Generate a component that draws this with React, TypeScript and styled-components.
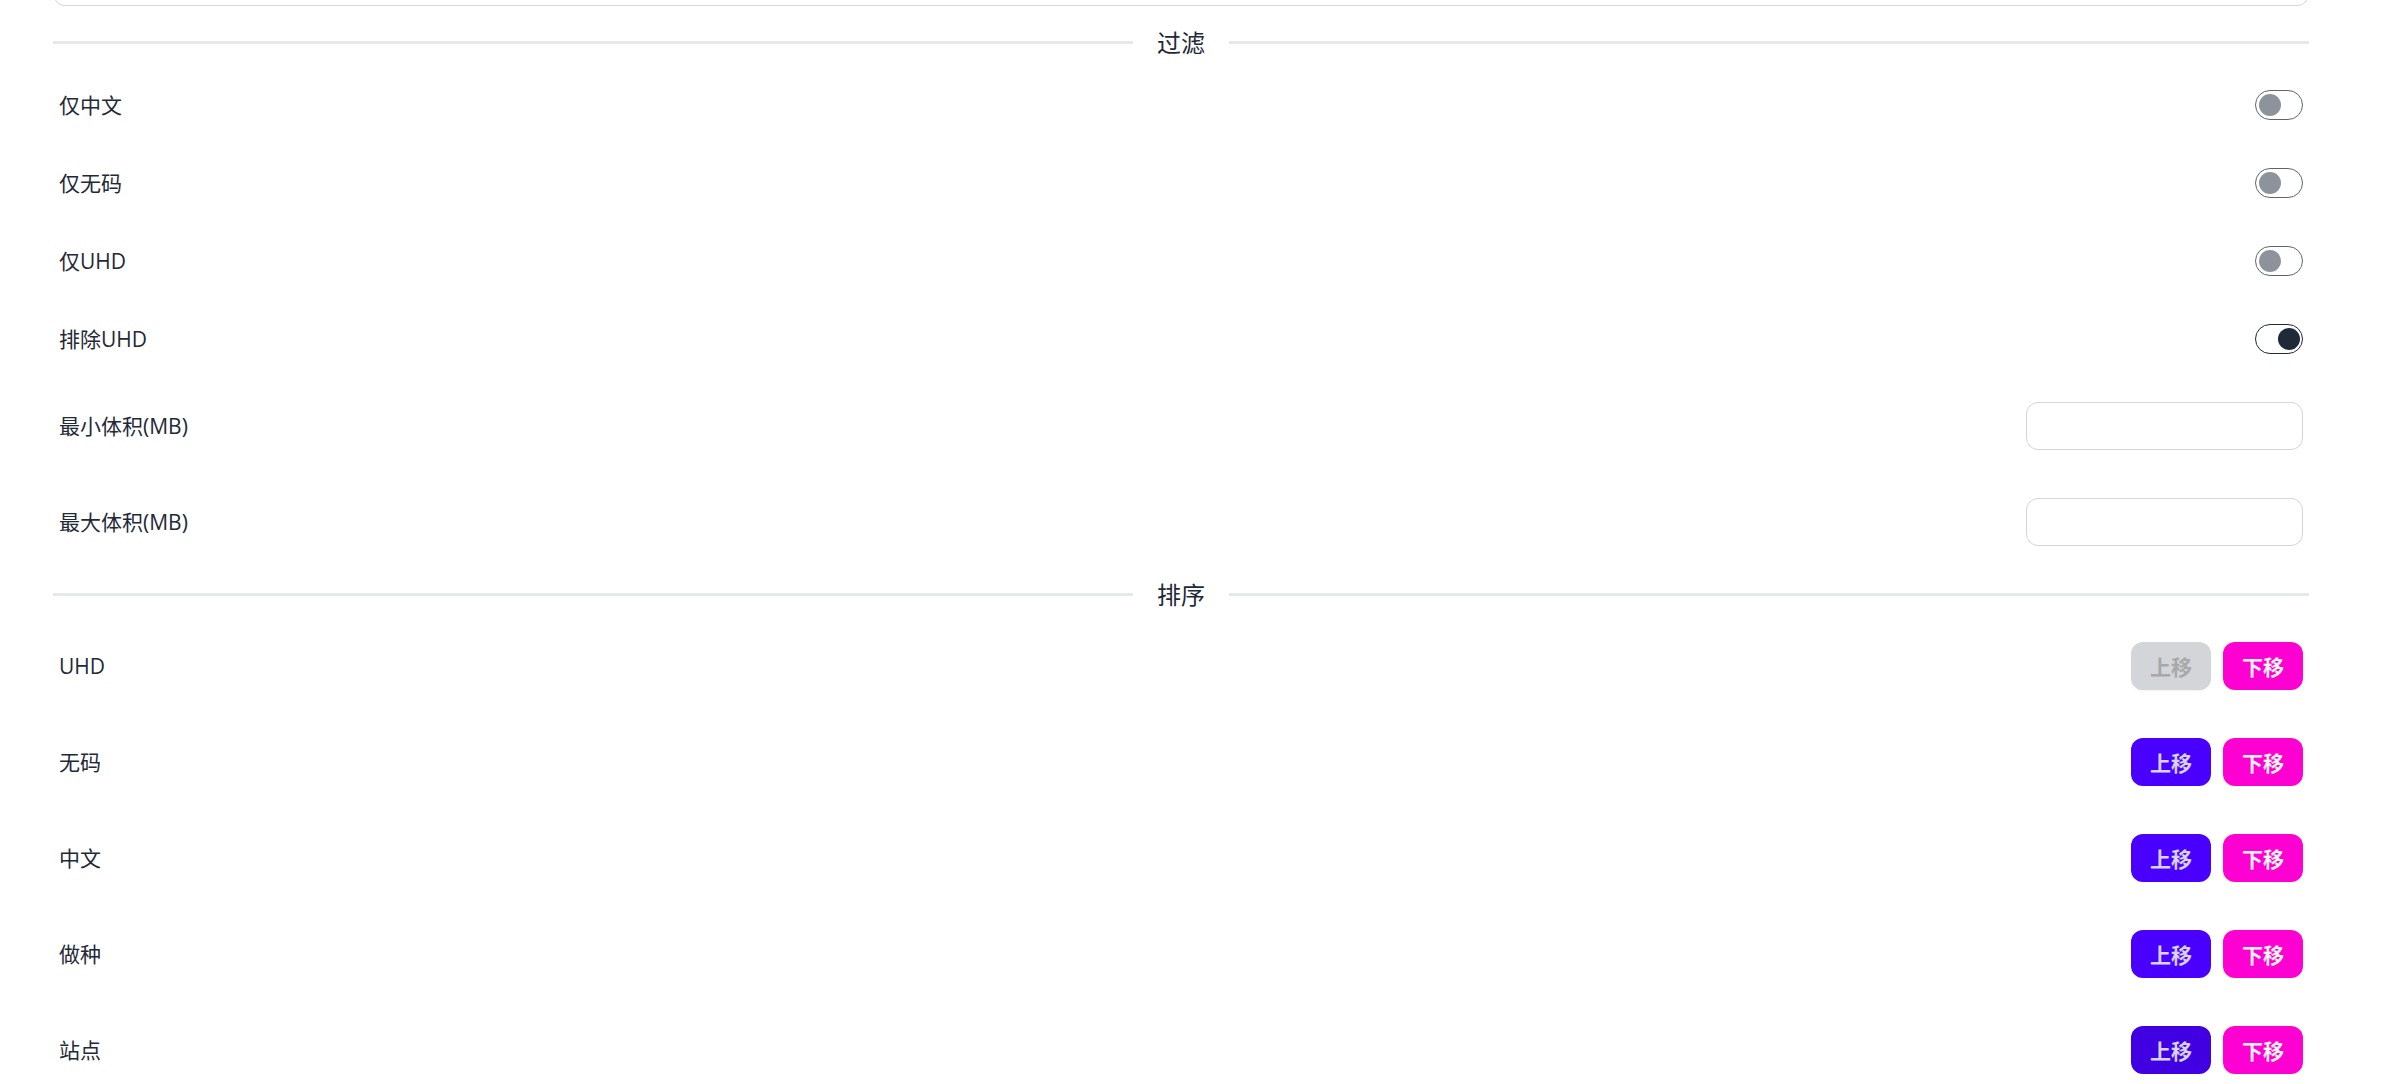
import React, { useState } from "react";
import styled, { createGlobalStyle } from "styled-components";

const GlobalStyle = createGlobalStyle`
    html, body {
        margin: 0;
        padding: 0;
        background: #ffffff;
        overflow: hidden;
    }
    body {
        font-family: "Open Sans", "Noto Sans CJK SC", sans-serif;
        color: #1f2937;
    }
`;

const filterItems = [
    { key: "chinese", label: "仅中文", on: false },
    { key: "uncensored", label: "仅无码", on: false },
    { key: "uhd", label: "仅UHD", on: false },
    { key: "noUhd", label: "排除UHD", on: true },
];

const sizeItems = [
    { key: "min", label: "最小体积(MB)" },
    { key: "max", label: "最大体积(MB)" },
];

const initialOrder = ["UHD", "无码", "中文", "做种", "站点"];

const App: React.FC = () => {
    const [toggles, setToggles] = useState<Record<string, boolean>>(
        Object.fromEntries(filterItems.map((f) => [f.key, f.on]))
    );
    const [sizes, setSizes] = useState<Record<string, string>>({ min: "", max: "" });
    const [order, setOrder] = useState<string[]>(initialOrder);

    const move = (index: number, dir: number) => {
        const next = [...order];
        const target = index + dir;
        if (target < 0 || target >= next.length) return;
        [next[index], next[target]] = [next[target], next[index]];
        setOrder(next);
    };

    return (
        <Page>
            <GlobalStyle />
            <TopField>
                <WideInput type="text" />
            </TopField>

            <Divider>过滤</Divider>
            {filterItems.map((item) => (
                <Row key={item.key} $height={78}>
                    <Label>{item.label}</Label>
                    <Toggle
                        type="button"
                        $on={toggles[item.key]}
                        onClick={() => setToggles({ ...toggles, [item.key]: !toggles[item.key] })}
                    >
                        <Knob $on={toggles[item.key]} />
                    </Toggle>
                </Row>
            ))}
            {sizeItems.map((item) => (
                <Row key={item.key} $height={96}>
                    <Label>{item.label}</Label>
                    <SmallInput
                        type="number"
                        value={sizes[item.key]}
                        onChange={(e) => setSizes({ ...sizes, [item.key]: e.target.value })}
                    />
                </Row>
            ))}

            <Divider>排序</Divider>
            {order.map((name, i) => (
                <Row key={name} $height={96}>
                    <Label>{name}</Label>
                    <ButtonGroup>
                        <MoveButton
                            $variant={i === 0 ? "disabled" : "primary"}
                            $hot={i === order.length - 1}
                            disabled={i === 0}
                            onClick={() => move(i, -1)}
                        >
                            上移
                        </MoveButton>
                        <MoveButton $variant="secondary" onClick={() => move(i, 1)}>
                            下移
                        </MoveButton>
                    </ButtonGroup>
                </Row>
            ))}
        </Page>
    );
};

const Page = styled.div`
    width: 2256px;
    margin-left: 53px;
    display: flex;
    flex-direction: column;
`;

const TopField = styled.div`
    margin-top: -42px;
    padding-bottom: 12px;
`;

const WideInput = styled.input`
    display: block;
    box-sizing: border-box;
    width: 100%;
    height: 48px;
    border: 1.5px solid #d4d5d8;
    border-radius: 12px;
    background: #fff;
    outline: none;
`;

const Divider = styled.div`
    display: flex;
    align-items: center;
    gap: 24px;
    height: 24px;
    margin: 12px 0;
    font-size: 24px;
    line-height: 24px;
    font-family: "Noto Sans CJK SC", sans-serif;
    color: #1f2937;
    white-space: nowrap;
    &::before,
    &::after {
        content: "";
        flex: 1;
        height: 3px;
        background: #e7e8ea;
    }
`;

const Row = styled.div<{ $height: number }>`
    display: flex;
    align-items: center;
    justify-content: space-between;
    height: ${(p) => p.$height}px;
    padding: 0 6px;
    box-sizing: border-box;
`;

const Label = styled.span`
    font-size: 21px;
    line-height: 30px;
    color: #1f2937;
`;

const Toggle = styled.button<{ $on: boolean }>`
    display: flex;
    align-items: center;
    justify-content: ${(p) => (p.$on ? "flex-end" : "flex-start")};
    box-sizing: border-box;
    width: 48px;
    height: 30px;
    padding: 0 2.5px;
    border: 1.5px solid ${(p) => (p.$on ? "#1f2937" : "#5f6570")};
    border-radius: 999px;
    background: #fff;
    cursor: pointer;
`;

const Knob = styled.span<{ $on: boolean }>`
    width: 22px;
    height: 22px;
    border-radius: 50%;
    background: ${(p) => (p.$on ? "#1f2937" : "#8e929a")};
`;

const SmallInput = styled.input`
    box-sizing: border-box;
    width: 277px;
    height: 48px;
    padding: 0 18px;
    border: 1.5px solid #d4d5d8;
    border-radius: 12px;
    background: #fff;
    font-size: 21px;
    outline: none;
    -moz-appearance: textfield;
    &::-webkit-outer-spin-button,
    &::-webkit-inner-spin-button {
        -webkit-appearance: none;
        margin: 0;
    }
`;

const ButtonGroup = styled.div`
    display: flex;
    gap: 12px;
`;

const variants = {
    primary: { bg: "#4a00ff", fg: "#d7d2ff" },
    secondary: { bg: "#ff00d3", fg: "#fff5fc" },
    disabled: { bg: "#d4d5d8", fg: "#a7a8ab" },
};

const MoveButton = styled.button<{ $variant: keyof typeof variants; $hot?: boolean }>`
    width: 80px;
    height: 48px;
    border: none;
    border-radius: 12px;
    font-family: "Noto Sans CJK SC", sans-serif;
    font-size: 21px;
    font-weight: 700;
    background: ${(p) => (p.$hot && p.$variant === "primary" ? "#4000e2" : variants[p.$variant].bg)};
    color: ${(p) => variants[p.$variant].fg};
    cursor: ${(p) => (p.$variant === "disabled" ? "not-allowed" : "pointer")};
    box-shadow: ${(p) => (p.$variant === "disabled" ? "0 1px 2px rgba(0,0,0,0.06)" : "none")};
`;

export default App;
